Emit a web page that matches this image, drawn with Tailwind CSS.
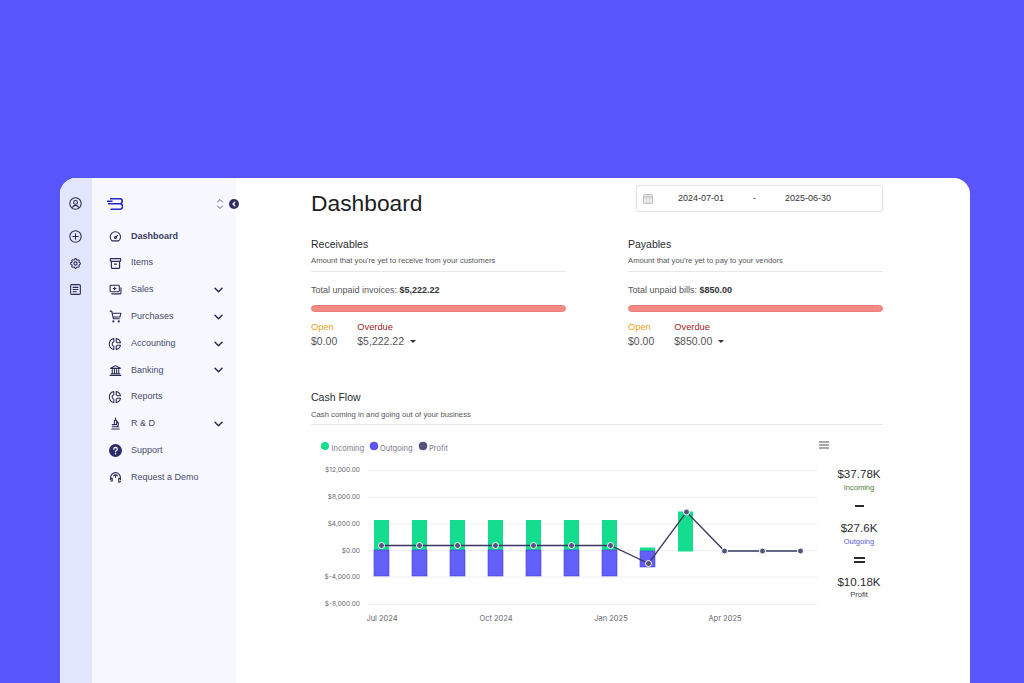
<!DOCTYPE html>
<html lang="en">
<head>
  <meta charset="UTF-8" />
  <title>Dashboard</title>
  <script src="https://cdn.jsdelivr.net/npm/@tailwindcss/browser@4"></script>
</head>
<body class="bg-[#5856fb] h-[683px] overflow-hidden font-['Liberation_Sans',Arial,sans-serif]">
  <div class="pt-[178px] pl-[60px] pr-[54px]">
    <div class="relative flex h-[505px] bg-white rounded-t-[16px] overflow-hidden">

      <!-- rail -->
      <div class="w-[32px] shrink-0 bg-[#e2e6fc] border-l border-[#f0f1fe] flex flex-col items-center pt-[19px] pr-[3px] text-[#2b2b55]">
        <svg class="w-[13px] h-[13px]" viewBox="0 0 24 24" fill="none" stroke="currentColor" stroke-width="2" stroke-linecap="round" stroke-linejoin="round"><circle cx="12" cy="12" r="10.500"/><circle cx="12" cy="10" r="3.500"/><path d="M6.500 19a6 6 0 0 1 11 0"/></svg>
        <svg class="w-[13px] h-[13px] mt-[20px]" viewBox="0 0 24 24" fill="none" stroke="currentColor" stroke-width="2" stroke-linecap="round"><circle cx="12" cy="12" r="10.500"/><path d="M12 7v10M7 12h10"/></svg>
        <svg class="w-[13px] h-[13px] mt-[14px]" viewBox="0 0 24 24" fill="none" stroke="currentColor" stroke-width="2" stroke-linecap="round" stroke-linejoin="round"><path d="M10.300 4.300c.4-1.800 3-1.800 3.400 0a1.700 1.700 0 0 0 2.600 1.100c1.500-.9 3.300.8 2.400 2.400a1.700 1.700 0 0 0 1 2.500c1.800.4 1.800 3 0 3.400a1.700 1.700 0 0 0-1 2.600c.9 1.500-.9 3.300-2.400 2.400a1.700 1.700 0 0 0-2.600 1c-.4 1.800-3 1.800-3.400 0a1.700 1.700 0 0 0-2.500-1c-1.600.9-3.300-.9-2.400-2.400a1.700 1.700 0 0 0-1.100-2.600c-1.800-.4-1.800-3 0-3.400a1.700 1.700 0 0 0 1.100-2.500c-.9-1.600.8-3.300 2.400-2.400a1.700 1.700 0 0 0 2.500-1.100z"/><circle cx="12" cy="12" r="3"/></svg>
        <svg class="w-[13px] h-[13px] mt-[13px]" viewBox="0 0 24 24" fill="none" stroke="currentColor" stroke-width="2" stroke-linecap="round" stroke-linejoin="round"><rect x="3" y="3" width="18" height="18" rx="2"/><path d="M7.500 8h9M7.500 12h9M7.500 16h6"/></svg>
      </div>

      <!-- sidebar -->
      <div class="w-[144px] shrink-0 bg-[#f7f8ff] pl-[15px] pr-[11px] text-[#4a4a6a] text-[9px]">
        <div class="flex items-center justify-between h-[50px] pt-[1px]">
          <svg class="w-[16px] h-[12px]" viewBox="0 0 16 12" fill="none" stroke="#2826c9" stroke-width="1.600"><path d="M3 .8h9.800a2.400 2.400 0 0 1 0 4.900H1M12.800 5.700a2.700 2.700 0 0 1 0 5.500H3.500M0 3.300h5.500"/></svg>
          <svg class="w-[8px] h-[12px] mr-[1px]" viewBox="0 0 8 12" fill="none" stroke="#55556f" stroke-width="1" stroke-linecap="round" stroke-linejoin="round"><path d="M1.500 4L4 1.500 6.500 4M1.500 8L4 10.500 6.500 8"/></svg>
        </div>
        <div class="flex flex-col">
          <div class="flex items-center h-[26.800px] mt-[-5px]">
            <svg class="w-[13px] h-[13px] text-[#2b2b55] mr-[9px] ml-[2px]" viewBox="0 0 24 24" fill="none" stroke="currentColor" stroke-width="2" stroke-linecap="round" stroke-linejoin="round"><path d="M5.500 20H18a9.500 9.500 0 1 0-12.500 0z"/><circle cx="12" cy="14" r="1.800"/><path d="M13.500 12.500L16 10"/></svg>
            <span class="font-bold text-[#3b3b60]">Dashboard</span>
          </div>
          <div class="flex items-center h-[26.800px]">
            <svg class="w-[13px] h-[13px] text-[#2b2b55] mr-[9px] ml-[2px]" viewBox="0 0 24 24" fill="none" stroke="currentColor" stroke-width="2.200" stroke-linecap="round" stroke-linejoin="round"><rect x="2.500" y="3" width="19" height="5" rx="1"/><path d="M4.500 8v12a1 1 0 0 0 1 1h13a1 1 0 0 0 1-1V8M10 13h4"/></svg>
            <span>Items</span>
          </div>
          <div class="flex items-center h-[26.800px]">
            <svg class="w-[13px] h-[13px] text-[#2b2b55] mr-[9px] ml-[2px]" viewBox="0 0 24 24" fill="none" stroke="currentColor" stroke-width="2" stroke-linecap="round" stroke-linejoin="round"><rect x="2" y="4" width="17" height="12" rx="1.500"/><path d="M5 20h16a1 1 0 0 0 1-1V9M10.500 7.500v5M8 10h5"/></svg>
            <span class="flex-1">Sales</span>
            <svg class="w-[9px] h-[6px] text-[#2b2b55] mr-[2px]" viewBox="0 0 9 6" fill="none" stroke="currentColor" stroke-width="1.500" stroke-linecap="round" stroke-linejoin="round"><path d="M1 1.200l3.500 3.500L8 1.200"/></svg>
          </div>
          <div class="flex items-center h-[26.800px]">
            <svg class="w-[13px] h-[13px] text-[#2b2b55] mr-[9px] ml-[2px]" viewBox="0 0 24 24" fill="none" stroke="currentColor" stroke-width="2" stroke-linecap="round" stroke-linejoin="round"><circle cx="8" cy="21" r="1"/><circle cx="18" cy="21" r="1"/><path d="M2 2h3l3 14h11M6 6h16l-2 7H7.500"/></svg>
            <span class="flex-1">Purchases</span>
            <svg class="w-[9px] h-[6px] text-[#2b2b55] mr-[2px]" viewBox="0 0 9 6" fill="none" stroke="currentColor" stroke-width="1.500" stroke-linecap="round" stroke-linejoin="round"><path d="M1 1.200l3.500 3.500L8 1.200"/></svg>
          </div>
          <div class="flex items-center h-[26.800px]">
            <svg class="w-[14px] h-[14px] text-[#2b2b55] mr-[9px] ml-[1px]" viewBox="0 0 24 24" fill="none" stroke="currentColor" stroke-width="1.800" stroke-linecap="round" stroke-linejoin="round"><path d="M10 2.500a9.700 9.700 0 0 0 0 19v-5.500a4.200 4.200 0 0 1 0-8zM14 2.500a9.700 9.700 0 0 1 7.500 7.500H16a4.200 4.200 0 0 0-2-2zM14 21.500a9.700 9.700 0 0 0 7.500-7.500H16a4.200 4.200 0 0 1-2 2z"/></svg>
            <span class="flex-1">Accounting</span>
            <svg class="w-[9px] h-[6px] text-[#2b2b55] mr-[2px]" viewBox="0 0 9 6" fill="none" stroke="currentColor" stroke-width="1.500" stroke-linecap="round" stroke-linejoin="round"><path d="M1 1.200l3.500 3.500L8 1.200"/></svg>
          </div>
          <div class="flex items-center h-[26.800px]">
            <svg class="w-[13px] h-[13px] text-[#2b2b55] mr-[9px] ml-[2px]" viewBox="0 0 24 24" fill="none" stroke="currentColor" stroke-width="2" stroke-linecap="round" stroke-linejoin="round"><path d="M2 21h20M4 18h16M6 10v8M10 10v8M14 10v8M18 10v8M3 8h18L12 3z"/></svg>
            <span class="flex-1">Banking</span>
            <svg class="w-[9px] h-[6px] text-[#2b2b55] mr-[2px]" viewBox="0 0 9 6" fill="none" stroke="currentColor" stroke-width="1.500" stroke-linecap="round" stroke-linejoin="round"><path d="M1 1.200l3.500 3.500L8 1.200"/></svg>
          </div>
          <div class="flex items-center h-[26.800px]">
            <svg class="w-[14px] h-[14px] text-[#2b2b55] mr-[9px] ml-[1px]" viewBox="0 0 24 24" fill="none" stroke="currentColor" stroke-width="1.800" stroke-linecap="round" stroke-linejoin="round"><path d="M10 2.500a9.700 9.700 0 0 0 0 19v-5.500a4.200 4.200 0 0 1 0-8zM14 2.500a9.700 9.700 0 0 1 7.500 7.500H16a4.200 4.200 0 0 0-2-2zM14 21.500a9.700 9.700 0 0 0 7.500-7.500H16a4.200 4.200 0 0 1-2 2z"/></svg>
            <span>Reports</span>
          </div>
          <div class="flex items-center h-[26.800px]">
            <svg class="w-[13px] h-[13px] text-[#2b2b55] mr-[9px] ml-[2px]" viewBox="0 0 24 24" fill="none" stroke="currentColor" stroke-width="2" stroke-linecap="round" stroke-linejoin="round"><path d="M5 22h14M6 18h12M10 14h4V6h-4zM12 6V2M14 8a6 6 0 0 1 3 7 5 5 0 0 1-3 3M6 14h4"/></svg>
            <span class="flex-1">R &amp; D</span>
            <svg class="w-[9px] h-[6px] text-[#2b2b55] mr-[2px]" viewBox="0 0 9 6" fill="none" stroke="currentColor" stroke-width="1.500" stroke-linecap="round" stroke-linejoin="round"><path d="M1 1.200l3.500 3.500L8 1.200"/></svg>
          </div>
          <div class="flex items-center h-[26.800px]">
            <svg class="w-[13px] h-[13px] mr-[9px] ml-[2px]" viewBox="0 0 24 24" fill="#2b2b6b"><circle cx="12" cy="12" r="12"/><path d="M8.800 9.500a3.200 3.200 0 1 1 4.800 2.800c-1 .6-1.600 1.100-1.600 2.200" fill="none" stroke="#fff" stroke-width="2.400" stroke-linecap="round"/><circle cx="12" cy="18" r="1.400" fill="#fff"/></svg>
            <span>Support</span>
          </div>
          <div class="flex items-center h-[26.800px]">
            <svg class="w-[13px] h-[13px] text-[#2b2b55] mr-[9px] ml-[2px]" viewBox="0 0 24 24" fill="none" stroke="currentColor" stroke-width="2" stroke-linecap="round" stroke-linejoin="round"><path d="M3 16v-4a9 9 0 0 1 18 0v4"/><path d="M3 15.500a2 2 0 0 1 2-2h1v5H3.500M21 15.500a2 2 0 0 0-2-2h-1v7h1.500a1.500 1.500 0 0 0 1.500-1.500M8.500 9a5 5 0 0 1 7 0M12 9v3"/></svg>
            <span>Request a Demo</span>
          </div>
        </div>
      </div>

      <!-- collapse button -->
      <div class="absolute left-[169px] top-[21px] w-[10px] h-[10px] rounded-full bg-[#2e2e63] flex items-center justify-center">
        <svg class="w-[6px] h-[6px]" viewBox="0 0 6 6" fill="none" stroke="#fff" stroke-width="1.300" stroke-linecap="round" stroke-linejoin="round"><path d="M3.800 1.200L2 3l1.800 1.800"/></svg>
      </div>

      <!-- main -->
      <div class="flex-1 min-w-0 pl-[75px] pr-[87px] pt-[7px]">
        <div class="flex justify-between h-[27px]">
          <h1 class="text-[22.800px] leading-[36px] text-[#1d1d22]">Dashboard</h1>
          <div class="w-[247px] h-[27px] border border-[#e4e4e8] rounded-[3px] shadow-[0_0_2px_rgba(0,0,0,0.08)] flex items-center text-[9px] text-[#333338]">
            <svg class="w-[10px] h-[10px] ml-[6px]" viewBox="0 0 10 10"><rect x="0.500" y="0.500" width="9" height="9" rx="1" fill="#e6e6ea" stroke="#bcbcc2"/><path d="M1 3h8" stroke="#bcbcc2"/></svg>
            <span class="ml-[25px]">2024-07-01</span>
            <span class="ml-[29px]">-</span>
            <span class="ml-[29px]">2025-06-30</span>
          </div>
        </div>

        <div class="grid grid-cols-2 gap-x-[62px] mt-[26px]">
          <div>
            <div class="text-[10.500px] leading-[12px] text-[#2c2c30]">Receivables</div>
            <div class="text-[7.700px] leading-[10px] text-[#55555a] mt-[6px] pb-[5px] border-b border-[#e8e8ec]">Amount that you're yet to receive from your customers</div>
            <div class="text-[9px] leading-[12px] text-[#55555a] mt-[12px]">Total unpaid invoices: <b class="text-[#333338]">$5,222.22</b></div>
            <div class="h-[7px] mt-[9px] bg-[#f48b86] border border-[#e87d7a] rounded-full"></div>
            <div class="flex gap-[20px] mt-[9px] text-[9.300px] leading-[12px]">
              <div><div class="text-[#e5a21b]">Open</div><div class="text-[#55555a] text-[10.500px] mt-[2px]">$0.00</div></div>
              <div><div class="text-[#9a1f1f]">Overdue</div><div class="text-[#55555a] text-[10.500px] mt-[2px] flex items-center">$5,222.22<span class="ml-[6px] border-x-[3px] border-t-[3px] border-x-transparent border-t-[#333338]"></span></div></div>
            </div>
          </div>
          <div>
            <div class="text-[10.500px] leading-[12px] text-[#2c2c30]">Payables</div>
            <div class="text-[7.700px] leading-[10px] text-[#55555a] mt-[6px] pb-[5px] border-b border-[#e8e8ec]">Amount that you're yet to pay to your vendors</div>
            <div class="text-[9px] leading-[12px] text-[#55555a] mt-[12px]">Total unpaid bills: <b class="text-[#333338]">$850.00</b></div>
            <div class="h-[7px] mt-[9px] bg-[#f48b86] border border-[#e87d7a] rounded-full"></div>
            <div class="flex gap-[20px] mt-[9px] text-[9.300px] leading-[12px]">
              <div><div class="text-[#e5a21b]">Open</div><div class="text-[#55555a] text-[10.500px] mt-[2px]">$0.00</div></div>
              <div><div class="text-[#9a1f1f]">Overdue</div><div class="text-[#55555a] text-[10.500px] mt-[2px] flex items-center">$850.00<span class="ml-[6px] border-x-[3px] border-t-[3px] border-x-transparent border-t-[#333338]"></span></div></div>
            </div>
          </div>
        </div>

        <div class="mt-[44px]">
          <div class="text-[10.500px] leading-[12px] text-[#2c2c30]">Cash Flow</div>
          <div class="text-[7.700px] leading-[10px] text-[#55555a] mt-[7px] pb-[4px] border-b border-[#e8e8ec]">Cash coming in and going out of your business</div>
        </div>

        <div class="flex mt-[10px]">
          <svg class="w-[520px] h-[195px] shrink-0" viewBox="0 0 520 195" font-family="Inter, sans-serif">
            <!-- legend -->
            <circle cx="14" cy="11" r="4" fill="#14dd8f"/>
            <text x="20.500" y="16" font-size="7.500" fill="#77777f">Incoming</text>
            <circle cx="63" cy="11" r="4" fill="#5b57f0" stroke="#3f3bd0" stroke-width="0.500"/>
            <text x="69" y="16" font-size="7.500" fill="#77777f">Outgoing</text>
            <circle cx="112" cy="11" r="4" fill="#54527f" stroke="#3a3868" stroke-width="0.500"/>
            <text x="118" y="16" font-size="7.500" fill="#77777f">Profit</text>
            <!-- menu -->
            <path d="M508 7h10M508 10h10M508 13h10" stroke="#55555a" stroke-width="1.200"/>
            <!-- grid -->
            <g stroke="#eceef1" stroke-width="1">
              <path d="M57 35.500h449M57 62.500h449M57 89h449M57 115.500h449M57 142h449M57 169.500h449"/>
            </g>
            <!-- y labels -->
            <g font-size="6.600" fill="#66666e" text-anchor="end">
              <text x="49" y="37">$12,000.00</text>
              <text x="49" y="64">$8,000.00</text>
              <text x="49" y="90.500">$4,000.00</text>
              <text x="49" y="117.500">$0.00</text>
              <text x="49" y="144">$-4,000.00</text>
              <text x="49" y="171">$-8,000.00</text>
            </g>
            <!-- x labels -->
            <g font-size="7.500" fill="#66666e" text-anchor="middle">
              <text x="71" y="185.500">Jul 2024</text>
              <text x="185" y="185.500">Oct 2024</text>
              <text x="300" y="185.500">Jan 2025</text>
              <text x="414" y="185.500">Apr 2025</text>
            </g>
            <!-- bars -->
            <g fill="#14dd8f">
              <rect x="63" y="85" width="15" height="30"/>
              <rect x="101" y="85" width="15" height="30"/>
              <rect x="139" y="85" width="15" height="30"/>
              <rect x="177" y="85" width="15" height="30"/>
              <rect x="215" y="85" width="15" height="30"/>
              <rect x="253" y="85" width="15" height="30"/>
              <rect x="291" y="85" width="15" height="30"/>
              <rect x="329" y="112.500" width="15" height="3.500"/>
              <rect x="367" y="76.500" width="15" height="40"/>
            </g>
            <g fill="#6360fa" stroke="#4441c8" stroke-width="0.600">
              <rect x="63" y="115" width="15" height="26"/>
              <rect x="101" y="115" width="15" height="26"/>
              <rect x="139" y="115" width="15" height="26"/>
              <rect x="177" y="115" width="15" height="26"/>
              <rect x="215" y="115" width="15" height="26"/>
              <rect x="253" y="115" width="15" height="26"/>
              <rect x="291" y="115" width="15" height="26"/>
              <rect x="329" y="116" width="15" height="16"/>
            </g>
            <!-- profit line -->
            <path d="M70.500 110.500H299.500L337.500 128.500L375.500 77L413.500 116H489.500" fill="none" stroke="#39375f" stroke-width="1.300"/>
            <g fill="#54527f" stroke="#fff" stroke-width="1">
              <circle cx="70.500" cy="110.500" r="3"/>
              <circle cx="108.500" cy="110.500" r="3"/>
              <circle cx="146.500" cy="110.500" r="3"/>
              <circle cx="184.500" cy="110.500" r="3"/>
              <circle cx="222.500" cy="110.500" r="3"/>
              <circle cx="260.500" cy="110.500" r="3"/>
              <circle cx="299.500" cy="110.500" r="3"/>
              <circle cx="337.500" cy="128.500" r="3"/>
              <circle cx="375.500" cy="77" r="3"/>
              <circle cx="413.500" cy="116" r="3"/>
              <circle cx="451.500" cy="116" r="3"/>
              <circle cx="489.500" cy="116" r="3"/>
            </g>
          </svg>

          <div class="ml-[2px] pt-[32px] w-[52px] shrink-0 flex flex-col items-center text-center">
            <div class="text-[11.600px] leading-[14px] text-[#2c2c30]">$37.78K</div>
            <div class="text-[7.500px] leading-[10px] text-[#4d7a3a] mt-[2px]">Incoming</div>
            <div class="w-[9px] h-[1.500px] bg-[#2c2c30] mt-[12px]"></div>
            <div class="text-[11.600px] leading-[14px] text-[#2c2c30] mt-[14px]">$27.6K</div>
            <div class="text-[7.500px] leading-[10px] text-[#5b57d8] mt-[2px]">Outgoing</div>
            <div class="w-[11px] h-[6px] border-y-2 border-[#2c2c30] mt-[10px]"></div>
            <div class="text-[11.600px] leading-[14px] text-[#2c2c30] mt-[12px]">$10.18K</div>
            <div class="text-[7.500px] leading-[10px] text-[#3a3a40] mt-[1px]">Profit</div>
          </div>
        </div>
      </div>
    </div>
  </div>
</body>
</html>
